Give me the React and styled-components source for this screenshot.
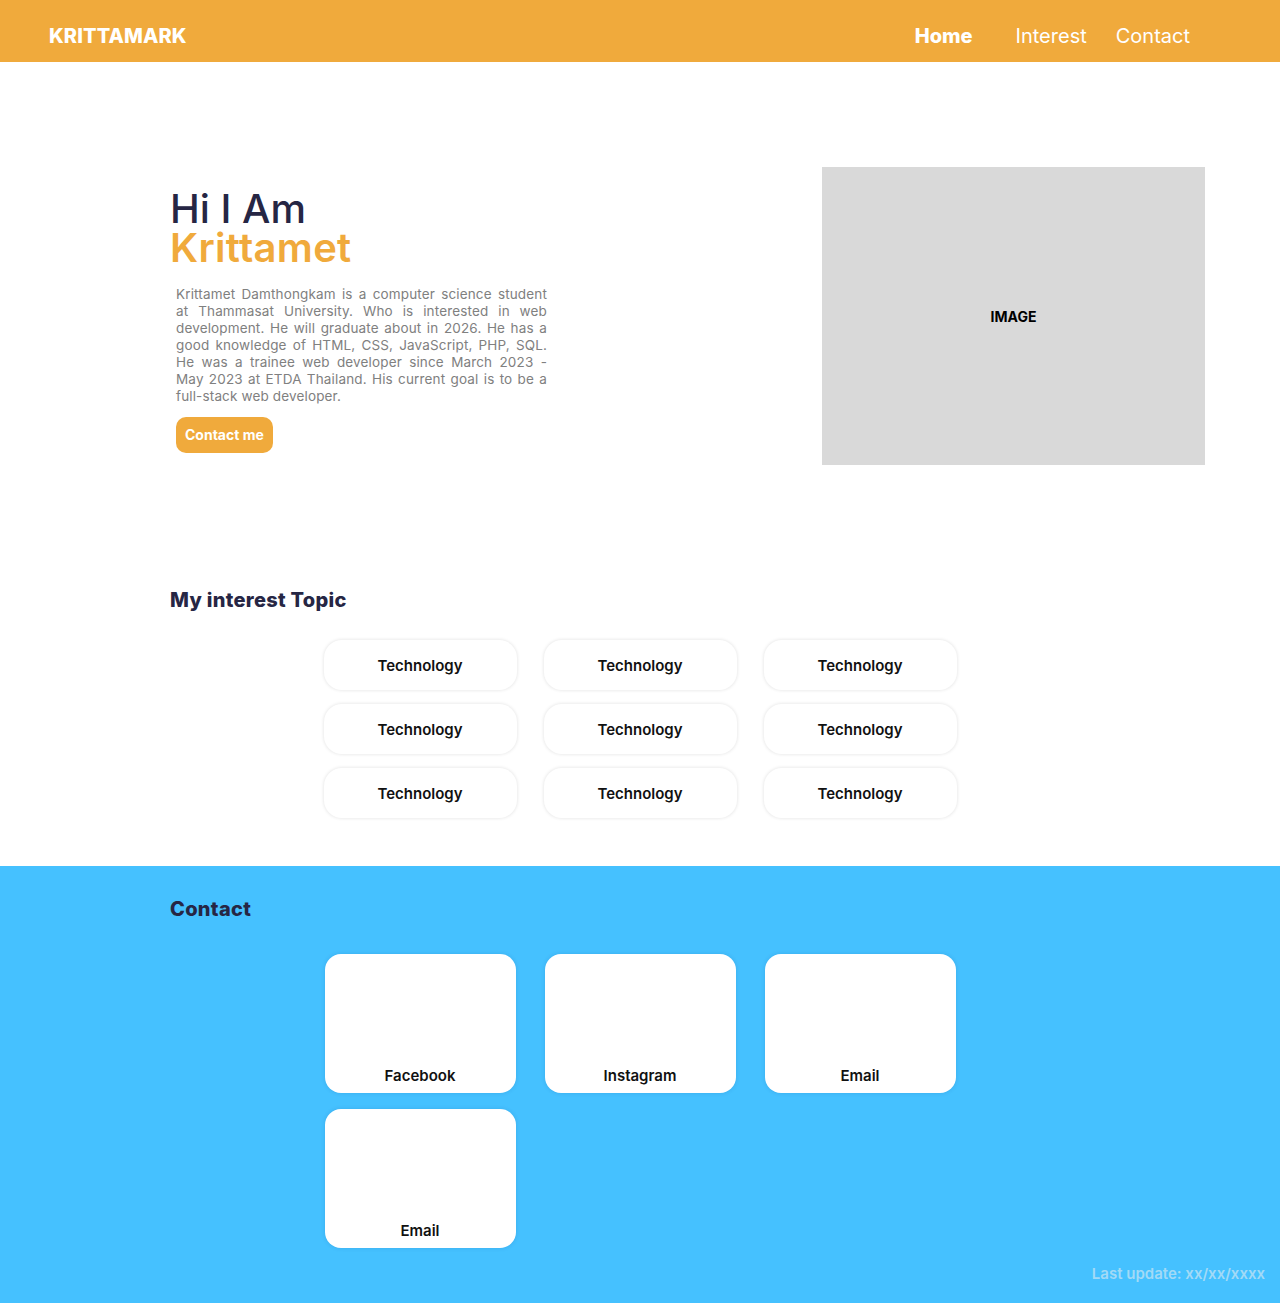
import React from "react";
import styled, { createGlobalStyle } from "styled-components";

const Global = createGlobalStyle`
  * { box-sizing: border-box; }
  html, body { margin: 0; padding: 0; background: #fff; }
  body { font-family: Inter, "Noto Sans", sans-serif; }
`;

const ORANGE = "#F0AA3C";
const NAVY = "#262644";

const Header = styled.header`
  height: 62px;
  background: ${ORANGE};
  display: flex;
  align-items: center;
  justify-content: space-between;
  padding: 10px 90px 0 49px;
`;

const Logo = styled.div`
  color: #fff;
  font-size: 20px;
  font-weight: 800;
  letter-spacing: 0.1px;
`;

const Nav = styled.nav`
  display: flex;
  align-items: center;
`;

const NavLink = styled.a`
  color: #fff;
  font-size: 20px;
  font-weight: ${(p) => (p.$active ? 800 : 400)};
  margin-left: ${(p) => p.$gap}px;
  text-decoration: none;
`;

const Hero = styled.section`
  display: flex;
  align-items: center;
  justify-content: space-between;
  padding: 105px 75px 0 170px;
`;

const HeroText = styled.div`
  display: flex;
  flex-direction: column;
  width: 377px;
  padding-top: 9px;
`;

const Hello = styled.h1`
  margin: 0;
  font-size: 40px;
  line-height: 39px;
  font-weight: 500;
  color: ${NAVY};
`;

const Name = styled(Hello)`
  color: ${ORANGE};
  font-weight: 600;
  letter-spacing: 0.3px;
`;

const Bio = styled.p`
  margin: 19px 0 0 6px;
  width: 371px;
  font-size: 13.5px;
  line-height: 17px;
  color: #808080;
  text-align: justify;
  letter-spacing: 0.15px;
`;

const Button = styled.button`
  margin: 12px 0 0 6px;
  align-self: flex-start;
  height: 36px;
  padding: 0 9px;
  border: none;
  border-radius: 10px;
  background: ${ORANGE};
  color: #fff;
  font-family: inherit;
  font-size: 14px;
  font-weight: 700;
`;

const ImageBox = styled.div`
  width: 383px;
  height: 298px;
  background: #d9d9d9;
  display: flex;
  align-items: center;
  justify-content: center;
  font-size: 14px;
  font-weight: 700;
  color: #000;
`;

const Interest = styled.section`
  padding: 123px 0 48px 170px;
`;

const Title = styled.h2`
  margin: 0;
  font-size: 20px;
  line-height: 24px;
  font-weight: 800;
  letter-spacing: 0.3px;
  color: ${NAVY};
`;

const Grid = styled.div`
  display: grid;
  grid-template-columns: repeat(3, ${(p) => p.$w}px);
  column-gap: ${(p) => p.$cg}px;
  row-gap: ${(p) => p.$rg}px;
  justify-content: center;
  margin: ${(p) => p.$top}px 170px 0 0;
`;

const TopicCard = styled.div`
  height: 50px;
  border-radius: 18px;
  background: #fff;
  box-shadow: 0 0 3px 1px rgba(0, 0, 0, 0.08);
  display: flex;
  align-items: center;
  justify-content: center;
  font-size: 15px;
  font-weight: 600;
  color: #111;
`;

const Contact = styled.section`
  background: #45c1ff;
  padding: 31px 0 0 170px;
`;

const ContactCard = styled.div`
  height: 139px;
  border-radius: 16px;
  background: #fff;
  box-shadow: 0 0 4px rgba(0, 60, 120, 0.15);
  display: flex;
  align-items: flex-end;
  justify-content: center;
  padding-bottom: 8px;
  font-size: 15px;
  font-weight: 600;
  color: #111;
`;

const Footer = styled.div`
  display: flex;
  justify-content: flex-end;
  padding: 17px 15px 20px 0;
  font-size: 15px;
  line-height: 18px;
  font-weight: 600;
  color: #a2daf6;
`;

const topics = Array.from({ length: 9 }, () => "Technology");
const contacts = ["Facebook", "Instagram", "Email", "Email"];

export default function App() {
  return (
    <>
      <Global />
      <Header>
        <Logo>KRITTAMARK</Logo>
        <Nav>
          <NavLink $active $gap={0}>Home</NavLink>
          <NavLink $gap={43}>Interest</NavLink>
          <NavLink $gap={29}>Contact</NavLink>
        </Nav>
      </Header>
      <Hero>
        <HeroText>
          <Hello>Hi I Am</Hello>
          <Name>Krittamet</Name>
          <Bio>
            Krittamet Damthongkam is a computer science student at Thammasat
            University. Who is interested in web development. He will graduate
            about in 2026. He has a good knowledge of HTML, CSS, JavaScript,
            PHP, SQL. He was a trainee web developer since March 2023 - May 2023
            at ETDA Thailand. His current goal is to be a full-stack web
            developer.
          </Bio>
          <Button>Contact me</Button>
        </HeroText>
        <ImageBox>IMAGE</ImageBox>
      </Hero>
      <Interest>
        <Title>My interest Topic</Title>
        <Grid $w={193} $cg={27} $rg={14} $top={28}>
          {topics.map((t, i) => (
            <TopicCard key={i}>{t}</TopicCard>
          ))}
        </Grid>
      </Interest>
      <Contact>
        <Title>Contact</Title>
        <Grid $w={191} $cg={29} $rg={16} $top={33}>
          {contacts.map((c, i) => (
            <ContactCard key={i}>{c}</ContactCard>
          ))}
        </Grid>
        <Footer>Last update: xx/xx/xxxx</Footer>
      </Contact>
    </>
  );
}
